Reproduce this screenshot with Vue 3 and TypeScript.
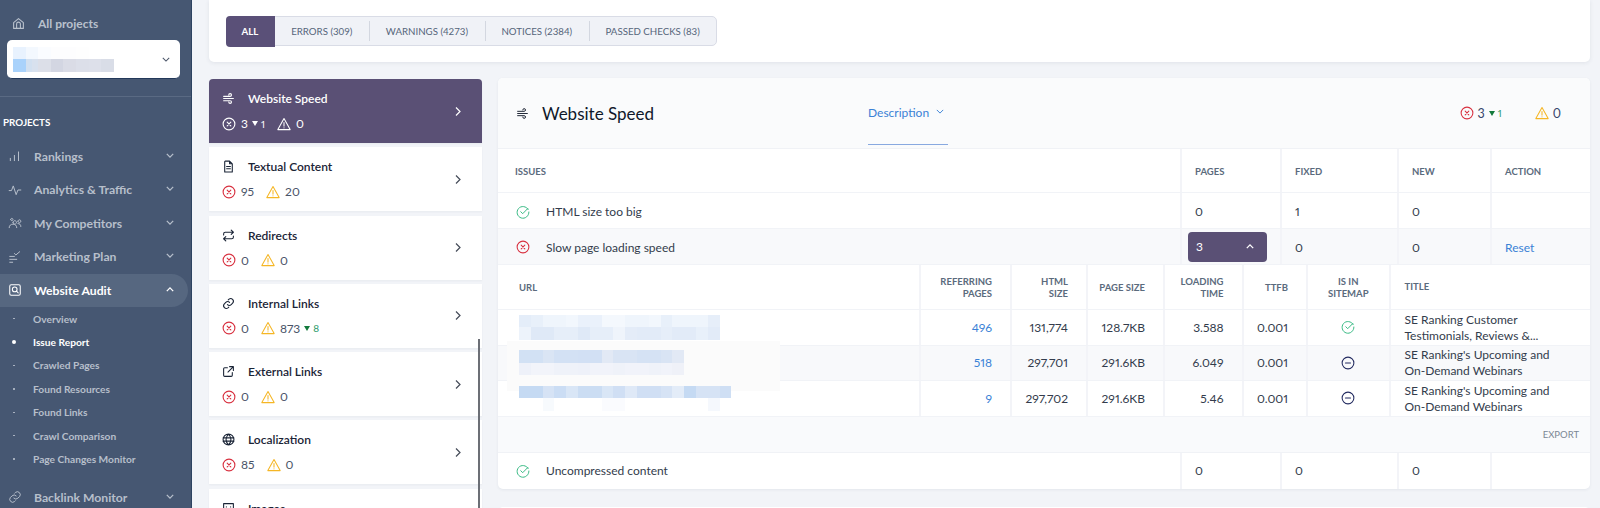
<template>
  <div class="page">
    <aside class="sidebar">
      <div class="all-projects">
        <svg class="home" viewBox="0 0 24 24" fill="none" stroke="currentColor" stroke-width="2" stroke-linejoin="round"><path d="M3 10.500 12 3l9 7.500V21H3z" /><path d="M8.500 21v-8a3.500 3.500 0 0 1 7 0v8" /></svg>
        <span>All projects</span>
      </div>
      <div class="project-select">
        <div class="pixels">
          <div v-for="(row, i) in selectBlur" :key="i" class="pixel-row">
            <i v-for="(c, j) in row" :key="j" class="pixel" :style="{ background: c }"></i>
          </div>
        </div>
        <svg class="select-caret" viewBox="0 0 10 6" fill="none" stroke="currentColor" stroke-width="1.300"><path d="m1 1 4 4 4-4" /></svg>
      </div>
      <div class="side-divider"></div>
      <div class="side-title">PROJECTS</div>
      <nav class="nav">
        <div v-for="item in navTop" :key="item.label" class="nav-item">
          <svg class="nav-icon" viewBox="0 0 24 24" fill="none" stroke="currentColor" stroke-width="1.700" stroke-linecap="round" stroke-linejoin="round"><path :d="item.icon" /></svg>
          <span>{{ item.label }}</span>
          <svg class="nav-caret" viewBox="0 0 10 6" fill="none" stroke="currentColor" stroke-width="1.600"><path d="m1 1 4 4 4-4" /></svg>
        </div>
        <div class="nav-item active">
          <svg class="nav-icon" viewBox="0 0 24 24" fill="none" stroke="currentColor" stroke-width="1.800" stroke-linecap="round" stroke-linejoin="round"><rect x="3" y="3" width="18" height="18" rx="2.500" /><circle cx="11.500" cy="11" r="4" /><path d="m14.500 14 3 3" /></svg>
          <span>Website Audit</span>
          <svg class="nav-caret" viewBox="0 0 10 6" fill="none" stroke="currentColor" stroke-width="1.600"><path d="m1 5 4-4 4 4" /></svg>
        </div>
        <div class="subnav">
          <div v-for="s in subNav" :key="s" class="sub-item" :class="{ current: s === 'Issue Report' }">
            <i class="dot"></i><span>{{ s }}</span>
          </div>
        </div>
        <div class="nav-item backlink">
          <svg class="nav-icon" viewBox="0 0 24 24" fill="none" stroke="currentColor" stroke-width="1.700" stroke-linecap="round" stroke-linejoin="round"><path :d="linkIcon" /></svg>
          <span>Backlink Monitor</span>
          <svg class="nav-caret" viewBox="0 0 10 6" fill="none" stroke="currentColor" stroke-width="1.600"><path d="m1 1 4 4 4-4" /></svg>
        </div>
      </nav>
    </aside>

    <main class="main">
      <section class="top-card">
        <div class="tabs">
          <button v-for="(t, i) in tabs" :key="t" class="tab" :class="{ on: i === 0 }">{{ t }}</button>
        </div>
      </section>

      <div class="columns">
        <div class="cat-list">
          <div v-for="(c, i) in categories" :key="c.name" class="cat" :class="{ selected: i === 0 }">
            <div class="cat-body">
              <div class="cat-name">
                <svg class="cat-icon" viewBox="0 0 24 24" fill="none" stroke="currentColor" stroke-width="2" stroke-linecap="round" stroke-linejoin="round"><path :d="c.icon" /></svg>
                <span>{{ c.name }}</span>
              </div>
              <div class="cat-stats">
                <svg class="stat-icon err" viewBox="0 0 20 20" fill="none" stroke="currentColor" stroke-width="1.600" stroke-linecap="round"><circle cx="10" cy="10" r="8.400" /><path d="m7.400 7.400 5.200 5.200m0-5.200-5.200 5.200" /></svg>
                <span class="num">{{ c.errors }}</span>
                <span v-if="c.errDelta" class="delta"><i class="tri"></i>{{ c.errDelta }}</span>
                <svg class="stat-icon warn" viewBox="0 0 20 20" fill="none" stroke="currentColor" stroke-width="1.500" stroke-linejoin="round" stroke-linecap="round"><path d="M10 2.200 18.800 18H1.200z" /><path d="M10 8v5m0 2.300v.2" /></svg>
                <span class="num">{{ c.warnings }}</span>
                <span v-if="c.warnDelta" class="delta"><i class="tri"></i>{{ c.warnDelta }}</span>
              </div>
            </div>
            <svg class="cat-arrow" viewBox="0 0 6 10" fill="none" stroke="currentColor" stroke-width="1.200"><path d="m1 1 4 4-4 4" /></svg>
          </div>
          <i class="scrollbar"></i>
        </div>

        <div class="detail-col">
          <section class="detail">
            <header class="detail-head">
              <div class="detail-title">
                <svg class="title-icon" viewBox="0 0 24 24" fill="none" stroke="currentColor" stroke-width="1.800" stroke-linecap="round"><path :d="windIcon" /></svg>
                <h2>Website Speed</h2>
              </div>
              <div class="desc-tab">
                <span>Description</span>
                <svg viewBox="0 0 10 6" fill="none" stroke="currentColor" stroke-width="1.200"><path d="m1 1 4 4 4-4" /></svg>
              </div>
              <div class="head-stats">
                <svg class="stat-icon err" viewBox="0 0 20 20" fill="none" stroke="currentColor" stroke-width="1.500" stroke-linecap="round"><circle cx="10" cy="10" r="8.400" /><path d="m7.400 7.400 5.200 5.200m0-5.200-5.200 5.200" /></svg>
                <span class="hnum">3</span>
                <span class="delta"><i class="tri"></i>1</span>
                <svg class="stat-icon warn head-warn" viewBox="0 0 20 20" fill="none" stroke="currentColor" stroke-width="1.500" stroke-linejoin="round" stroke-linecap="round"><path d="M10 2.200 18.800 18H1.200z" /><path d="M10 8v5m0 2.300v.2" /></svg>
                <span class="hnum">0</span>
              </div>
            </header>

            <div class="issue-row issue-head">
              <div class="c-issue">ISSUES</div>
              <div class="c">PAGES</div>
              <div class="c">FIXED</div>
              <div class="c">NEW</div>
              <div class="c">ACTION</div>
            </div>

            <div class="issue-row r36 nudge2">
              <div class="c-issue">
                <svg class="row-icon ok" viewBox="0 0 20 20" fill="none" stroke="currentColor" stroke-width="1.400" stroke-linecap="round" stroke-linejoin="round"><path :d="okIcon" /></svg>
                <span>HTML size too big</span>
              </div>
              <div class="c">0</div>
              <div class="c">1</div>
              <div class="c">0</div>
              <div class="c"></div>
            </div>

            <div class="issue-row r36 tinted nudge1">
              <div class="c-issue">
                <svg class="row-icon err" viewBox="0 0 20 20" fill="none" stroke="currentColor" stroke-width="1.500" stroke-linecap="round"><circle cx="10" cy="10" r="8.400" /><path d="m7.400 7.400 5.200 5.200m0-5.200-5.200 5.200" /></svg>
                <span>Slow page loading speed</span>
              </div>
              <div class="c pages-cell">
                <div class="pages-btn">
                  <span>3</span>
                  <svg viewBox="0 0 10 6" fill="none" stroke="currentColor" stroke-width="1.600"><path d="m1 5 4-4 4 4" /></svg>
                </div>
              </div>
              <div class="c">0</div>
              <div class="c">0</div>
              <div class="c link">Reset</div>
            </div>

            <div class="url-row url-head">
              <div class="u-url">URL</div>
              <div class="u">REFERRING<br />PAGES</div>
              <div class="u">HTML<br />SIZE</div>
              <div class="u">PAGE SIZE</div>
              <div class="u">LOADING<br />TIME</div>
              <div class="u">TTFB</div>
              <div class="u center">IS IN<br />SITEMAP</div>
              <div class="u left">TITLE</div>
            </div>

            <div class="url-body">
              <div v-for="(r, i) in urls" :key="i" class="url-row body" :class="{ tinted: i === 1 }">
                <div class="u-url">
                  <div class="pixels">
                    <div v-for="(row, k) in r.blur" :key="k" class="pixel-row">
                      <i v-for="(c, j) in row" :key="j" class="pixel" :style="{ background: c }"></i>
                    </div>
                  </div>
                </div>
                <div class="u link">{{ r.refs }}</div>
                <div class="u">{{ r.html }}</div>
                <div class="u">{{ r.size }}</div>
                <div class="u">{{ r.time }}</div>
                <div class="u">{{ r.ttfb }}</div>
                <div class="u center">
                  <svg v-if="r.inMap" class="row-icon ok" viewBox="0 0 20 20" fill="none" stroke="currentColor" stroke-width="1.400" stroke-linecap="round" stroke-linejoin="round"><path :d="okIcon" /></svg>
                  <svg v-else class="row-icon minus" viewBox="0 0 20 20" fill="none" stroke="currentColor" stroke-width="1.500" stroke-linecap="round"><circle cx="10" cy="10" r="8.400" /><path d="M6.400 10h7.200" /></svg>
                </div>
                <div class="u left title-cell">{{ r.title }}</div>
              </div>
              <i class="smudge"></i>
            </div>

            <div class="export-row">EXPORT</div>

            <div class="issue-row r36 last">
              <div class="c-issue">
                <svg class="row-icon ok" viewBox="0 0 20 20" fill="none" stroke="currentColor" stroke-width="1.400" stroke-linecap="round" stroke-linejoin="round"><path :d="okIcon" /></svg>
                <span>Uncompressed content</span>
              </div>
              <div class="c">0</div>
              <div class="c">0</div>
              <div class="c">0</div>
              <div class="c"></div>
            </div>
          </section>
          <section class="next-card"></section>
        </div>
      </div>
    </main>
  </div>
</template>

<script setup lang="ts">
const windIcon = "M3 8h12a2.500 2.500 0 1 0-2.500-2.500M3 12h18M3 16h12a2.500 2.500 0 1 1-2.500 2.500";
const okIcon = "M17.400 6.500A8.400 8.400 0 1 0 18.400 10M6.800 9.600l2.800 2.800 7.400-7.600";
const linkIcon = "M10 14a5 5 0 0 0 7 0l3-3a5 5 0 0 0-7-7l-1.500 1.500M14 10a5 5 0 0 0-7 0l-3 3a5 5 0 0 0 7 7l1.500-1.500";

const tabs = ["ALL", "ERRORS (309)", "WARNINGS (4273)", "NOTICES (2384)", "PASSED CHECKS (83)"];

const navTop = [
  { label: "Rankings", icon: "M4 20v-4M11 20v-9M18 20V5" },
  { label: "Analytics & Traffic", icon: "M2 13h4l3-8 5 15 3-8h5" },
  { label: "My Competitors", icon: "M8.500 11a3 3 0 1 0 0-.01M17 9a2.500 2.500 0 1 0 0-.01M4.500 6a2 2 0 1 0 0-.01M2 20c0-4 3-6 6.500-6s6.500 2 6.500 6M17 13c3 0 5 1.500 5 5" },
  { label: "Marketing Plan", icon: "M3 11h8M3 16h12M3 21h5M11 6l2.500 2.500L20 3" },
];

const subNav = ["Overview", "Issue Report", "Crawled Pages", "Found Resources", "Found Links", "Crawl Comparison", "Page Changes Monitor"];

const categories = [
  { name: "Website Speed", icon: windIcon, errors: 3, errDelta: 1, warnings: 0 },
  { name: "Textual Content", icon: "M6 2h8l5 5v15H5V3zM14 2v5h5M8.500 12h7M8.500 16h7", errors: 95, warnings: 20 },
  { name: "Redirects", icon: "M17 2l4 4-4 4M3 11V9a3 3 0 0 1 3-3h15M7 22l-4-4 4-4M21 13v2a3 3 0 0 1-3 3H3", errors: 0, warnings: 0 },
  { name: "Internal Links", icon: linkIcon, errors: 0, warnings: 873, warnDelta: 8 },
  { name: "External Links", icon: "M19 14v5a2 2 0 0 1-2 2H5a2 2 0 0 1-2-2V7a2 2 0 0 1 2-2h5M14 3h7v7M21 3 11 13", errors: 0, warnings: 0 },
  { name: "Localization", icon: "M12 2a10 10 0 1 0 0 20 10 10 0 0 0 0-20zM2 9h20M2 15h20M12 2c-6 6-6 14 0 20M12 2c6 6 6 14 0 20", errors: 85, warnings: 0 },
  { name: "Images", icon: "M3 3h18v18H3zM8 9v.1M16 9v.1M3 17l5-4 4 3 4-4 5 4", errors: 0, warnings: 0 },
];

const b = (s: string) => s.split(" ").map((c) => "#" + c);

const selectBlur = [
  b("e8f2fe f3f8fe fafcff fdfdfe fdfdfe fefefe"),
  b("a9d2fb a9d2fb d2e0f0 d8e1ee dcdfe8 dcdfe8 d3d6e2 d3d6e2 dadce6 dadce6 dcdfe9 dcdfe9 dde0ea dde0ea d9dde7 d9dde7"),
];

const urls = [
  {
    blur: [
      b("e4edf9 e8f0fa eff5fc eff5fc f2f7fd eaf1fb eaf1fb f4f8fd f4f8fd eff5fc eff5fc f2f7fd e8f0fa eff5fc eff5fc eff5fc e6eef9"),
      b("edf3fb dfe9f7 dfe9f7 e6eef9 e6eef9 dfe9f7 e6eef9 e6eef9 eff4fb e4ecf8 e2ebf8 e2ebf8 e6eef9 e2ebf8 e2ebf8 e8f0fa e2ebf8"),
    ],
    refs: "496", html: "131,774", size: "128.7KB", time: "3.588", ttfb: "0.001", inMap: true,
    title: "SE Ranking Customer Testimonials, Reviews &...",
  },
  {
    blur: [
      b("d2e1f4 d2e1f4 dae5f4 d3e1f4 d3e1f4 d2e0f4 d2e0f4 e2e9f5 d9e4f4 d9e4f4 d5e2f4 d5e2f4 d9e4f4 e2e9f5"),
      b("eef1f9 f2f4fa f2f4fa eff2f9 eff2f9 eef1f9 f1f3fa f1f3fa eff2f9 f1f3fa f1f3fa eff2f9 f1f3fa eff1f8"),
    ],
    refs: "518", html: "297,701", size: "291.6KB", time: "6.049", ttfb: "0.001", inMap: false,
    title: "SE Ranking's Upcoming and On-Demand Webinars",
  },
  {
    blur: [
      b("c5daf3 c5daf3 d6e3f5 cbddf4 d9e6f6 cbddf3 cbddf3 d9e6f6 d0dff4 dfe9f7 d0dff4 d0dff4 d6e3f5 e3ecf8 c5daf3 d6e3f5 d6e3f5 cfdff4"),
      b("ffffff ffffff f7fafd ffffff ffffff ffffff ffffff fafbfe fafbfe ffffff ffffff ffffff ffffff ffffff ffffff ffffff f5f8fd ffffff"),
    ],
    refs: "9", html: "297,702", size: "291.6KB", time: "5.46", ttfb: "0.001", inMap: false,
    title: "SE Ranking's Upcoming and On-Demand Webinars",
  },
];
</script>

<style>
html,
body {
  margin: 0;
  height: 508px;
  overflow: hidden;
  background: #f2f4f8;
}
</style>

<style scoped>
.page {
  display: flex;
  height: 508px;
  overflow: hidden;
  font-family: Lato, "Liberation Sans", sans-serif;
  font-variant-numeric: proportional-nums;
  color: #1d2433;
  background: #f2f4f8;
}
.sidebar {
  flex: 0 0 191px;
  height: 508px;
  overflow: hidden;
  background: #465772;
  border-right: 1px solid #2d4361;
  color: #b9c1cd;
}
.all-projects {
  display: flex;
  align-items: center;
  height: 24px;
  padding: 11px 0 5px 12px;
  font-size: 12px;
  font-weight: 700;
  gap: 13px;
}
.home {
  width: 13px;
  height: 13px;
}
.project-select {
  display: flex;
  align-items: center;
  justify-content: space-between;
  height: 39px;
  margin: 0 11px 0 7px;
  padding: 0 10px 0 6px;
  background: #fff;
  border-radius: 5px;
  border-bottom: 1px solid #23395a;
  box-sizing: border-box;
}
.select-caret {
  width: 8px;
  height: 5px;
  color: #4a5568;
}
.pixels {
  position: relative;
  z-index: 2;
  display: flex;
  flex-direction: column;
}
.pixel-row {
  display: flex;
  height: 12.500px;
}
.pixel {
  display: block;
  flex: 0 0 11.800px;
  height: 100%;
}
.project-select .pixel {
  flex-basis: 6.300px;
}
.project-select .pixel-row:first-child .pixel {
  flex-basis: 12.600px;
}
.side-divider {
  height: 1px;
  margin-top: 17px;
  background: #5a6a83;
}
.side-title {
  margin: 19px 0 0 3px;
  font-size: 9.800px;
  line-height: 13px;
  font-weight: 700;
  color: #fff;
}
.nav {
  margin-top: 10.500px;
  display: flex;
  flex-direction: column;
}
.nav-item {
  display: flex;
  align-items: center;
  height: 33.500px;
  padding-left: 8px;
  font-size: 12.200px;
  font-weight: 700;
  color: #b7bfcb;
  width: 188px;
  box-sizing: border-box;
}
.nav-icon {
  flex: 0 0 14px;
  width: 14px;
  height: 14px;
  margin-right: 12px;
}
.nav-item > span {
  flex: 1;
}
.nav-caret {
  width: 8px;
  height: 5px;
  margin-right: 14px;
  margin-top: -2px;
}
.nav-item.active {
  color: #fff;
  background: #566780;
  border-radius: 0 17px 17px 0;
}
.sub-item {
  display: flex;
  align-items: center;
  height: 23.400px;
  font-size: 10.200px;
  font-weight: 700;
  color: #b7bfcb;
}
.sub-item.current {
  color: #fff;
}
.dot {
  display: block;
  width: 1.500px;
  height: 1.500px;
  margin: 0 18.500px 0 13px;
  border-radius: 50%;
  background: #b7bfcb;
}
.current .dot {
  width: 4px;
  height: 4px;
  margin: 0 17px 0 12px;
  background: #fff;
}
.backlink {
  margin-top: 10px;
}

.main {
  flex: 1;
  min-width: 0;
  padding-left: 17px;
}
.top-card {
  display: flex;
  align-items: center;
  width: 1381px;
  height: 62px;
  padding-left: 17px;
  box-sizing: border-box;
  background: #fff;
  border-radius: 0 0 5px 5px;
  box-shadow: 0 1px 4px rgba(40, 50, 80, 0.09);
}
.tabs {
  display: flex;
  height: 30px;
  border-radius: 5px;
  background: #f0f2f7;
  border: 1.500px solid #d9dce6;
  box-sizing: border-box;
}
.tab {
  position: relative;
  padding: 0 16.700px;
  margin: 0;
  border: 0;
  background: none;
  font-family: inherit;
  font-size: 9.700px;
  font-weight: 400;
  color: #55657a;
}
.tab + .tab:not(:nth-child(2))::before {
  content: "";
  position: absolute;
  left: 0;
  top: 4px;
  bottom: 4px;
  width: 1px;
  background: #d3d7e0;
}
.tab.on {
  width: 49px;
  margin: -1.500px 0 -1.500px -1.500px;
  padding: 0;
  background: #5a5078;
  color: #fff;
  font-weight: 700;
  border-radius: 4px 0 0 4px;
}
.columns {
  display: flex;
  margin-top: 15px;
  gap: 16px;
}
.cat-list {
  position: relative;
  width: 273px;
  flex: none;
  padding-top: 2px;
}
.cat {
  display: flex;
  align-items: center;
  height: 64px;
  margin-bottom: 4.300px;
  padding: 0 21px 0 13px;
  background: #fff;
  box-shadow: 0 1px 2px rgba(40, 50, 80, 0.05);
}
.cat.selected {
  background: #5a5075;
  color: #fff;
  border-radius: 4px 4px 0 0;
}
.cat-body {
  flex: 1;
}
.cat-name {
  display: flex;
  align-items: center;
  gap: 14px;
  margin-top: -2px;
  font-size: 12px;
  font-weight: 600;
  color: #1a2436;
  height: 20px;
}
.selected .cat-name {
  color: #fff;
}
.cat-icon {
  width: 13px;
  height: 13px;
  flex: none;
  margin-right: -1px;
}
.cat-stats {
  display: flex;
  align-items: center;
  margin-top: 7px;
  height: 16px;
  font-size: 12px;
  color: #4a5468;
}
.selected .cat-stats {
  color: #fff;
}
.stat-icon {
  width: 14px;
  height: 14px;
  flex: none;
}
.err {
  color: #d8303f;
}
.warn {
  color: #f5b625;
}
.selected .stat-icon {
  color: #fff;
}
.num {
  margin-left: 5px;
}
.cat-stats .warn {
  margin-left: 12px;
}
.delta {
  display: inline-flex;
  align-items: center;
  margin-left: 4px;
  font-size: 10px;
  color: #2a9a6a;
}
.selected .delta {
  color: #fff;
}
.tri {
  display: inline-block;
  width: 0;
  height: 0;
  margin-right: 3px;
  border-left: 3px solid transparent;
  border-right: 3px solid transparent;
  border-top: 5px solid #137a3c;
}
.selected .tri {
  border-top-color: #fff;
}
.cat-arrow {
  width: 6px;
  height: 11px;
  color: #444b58;
}
.selected .cat-arrow {
  color: #fff;
}
.scrollbar {
  position: absolute;
  left: 269px;
  top: 262px;
  width: 2px;
  height: 200px;
  background: #6c6f76;
}
.detail-col {
  flex: none;
  width: 1092px;
}
.detail {
  margin-top: 1px;
  border-radius: 5px;
  background: #fff;
  box-shadow: 0 1px 3px rgba(40, 50, 80, 0.07);
}
.detail-head {
  display: flex;
  align-items: center;
  height: 71px;
  border-bottom: 1px solid #f0f2f6;
  background: #fafbfc;
  border-radius: 5px 5px 0 0;
  box-sizing: border-box;
}
.detail-title {
  display: flex;
  align-items: center;
  width: 370px;
  padding-left: 18px;
  box-sizing: border-box;
}
.title-icon {
  width: 13px;
  height: 13px;
  margin-right: 13px;
}
h2 {
  margin: 0;
  font-size: 17px;
  font-weight: 400;
  color: #10182a;
}
.desc-tab {
  display: flex;
  align-items: center;
  align-self: flex-start;
  gap: 7px;
  width: 80px;
  height: 67px;
  padding-top: 3px;
  border-bottom: 1px solid #88a9e0;
  box-sizing: border-box;
  font-size: 12px;
  color: #3b82d6;
}
.desc-tab svg {
  width: 8px;
  height: 5px;
  margin-top: -2px;
}
.head-stats {
  display: flex;
  align-items: center;
  margin-left: auto;
  padding-right: 29px;
  font-size: 12.500px;
  color: #37456a;
}
.hnum {
  margin-left: 4px;
}
.head-warn {
  margin-left: 33px;
}
.issue-row {
  display: grid;
  grid-template-columns: 682px 100px 117px 93px 100px;
  align-items: stretch;
  box-sizing: border-box;
  border-bottom: 1px solid #f1f3f7;
  font-size: 12px;
  color: #333c4c;
}
.issue-head {
  height: 44px;
  font-size: 9.500px;
  font-weight: 700;
  color: #5b6b7d;
}
.issue-head > div {
  padding-top: 1px;
}
.r36 {
  height: 36px;
}
.nudge2 > div {
  padding-top: 2px;
}
.nudge1 > div:not(.pages-cell) {
  padding-top: 1px;
}
.tinted {
  background: #f8f9fb;
}
.c-issue {
  display: flex;
  align-items: center;
  padding-left: 18px;
}
.issue-head .c-issue {
  padding-left: 17px;
}
.c {
  display: flex;
  align-items: center;
  padding-left: 13px;
  border-left: 2px solid #f3f4f8;
}
.issue-row .row-icon {
  margin-right: 16px;
}
.row-icon {
  width: 14px;
  height: 14px;
  flex: none;
}
.ok {
  color: #35b882;
}
.minus {
  color: #232b60;
}
.link {
  color: #3b82d6;
}
.pages-cell {
  padding-left: 6px;
}
.pages-btn {
  display: flex;
  align-items: center;
  justify-content: space-between;
  width: 79px;
  height: 30px;
  padding: 0 13px 0 8px;
  box-sizing: border-box;
  border-radius: 4px;
  background: #5a5075;
  color: #fff;
}
.pages-btn svg {
  width: 8px;
  height: 5px;
}
.url-row {
  display: grid;
  grid-template-columns: 421px 91px 76px 77px 78.500px 64.500px 82.500px 201.500px;
  box-sizing: border-box;
  border-bottom: 1px solid #f1f3f7;
  font-size: 12px;
  color: #333c4c;
}
.url-head {
  height: 45px;
  font-size: 9.500px;
  font-weight: 700;
  line-height: 12.500px;
  color: #5b6b7d;
}
.url-head > div {
  padding-top: 2px;
}
.url-body {
  position: relative;
}
.url-row.body {
  height: 35.500px;
}
.u-url {
  display: flex;
  align-items: center;
  padding-left: 21px;
  min-width: 0;
}
.u {
  display: flex;
  align-items: center;
  justify-content: flex-end;
  text-align: right;
  padding-right: 18px;
  border-left: 2px solid #f3f4f8;
}
.u.center {
  justify-content: center;
  text-align: center;
  padding-right: 0;
}
.u.left {
  justify-content: flex-start;
  text-align: left;
  padding: 0 0 0 14px;
}
.u.left.title-cell {
  line-height: 16px;
  padding: 1px 30px 0 14px;
}
.smudge {
  position: absolute;
  z-index: 1;
  left: 9px;
  top: 31px;
  width: 273px;
  height: 50px;
  background: #fbfbfb;
}
.export-row {
  display: flex;
  align-items: center;
  justify-content: flex-end;
  height: 36px;
  padding-right: 11px;
  box-sizing: border-box;
  background: #f9fafc;
  border-bottom: 1px solid #f0f2f6;
  font-size: 9.500px;
  color: #7b8794;
}
.last {
  height: 36.500px;
  border-bottom: 0;
  border-radius: 0 0 5px 5px;
}
.next-card {
  height: 40px;
  margin-top: 18px;
  background: #fff;
  border-radius: 5px;
}
</style>
